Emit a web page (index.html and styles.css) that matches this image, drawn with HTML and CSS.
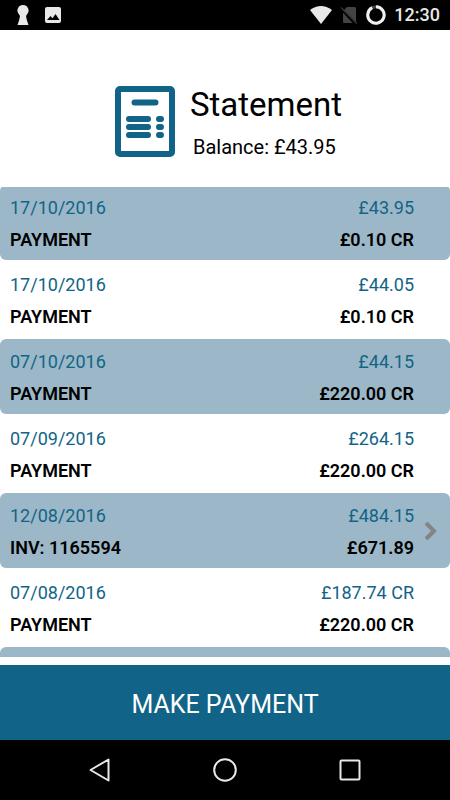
FILE: index.html
```html
<!DOCTYPE html>
<html lang="en">
<head>
<meta charset="utf-8">
<meta name="viewport" content="width=device-width, initial-scale=1">
<title>Statement</title>
<link rel="stylesheet" href="styles.css">
</head>
<body>
<div class="status-bar">
  <svg width="12" height="20" viewBox="0 0 12 20" fill="#e8e8e8" aria-hidden="true"><path d="M6 0a5.500 5.500 0 0 0-4.300 9L3 11Q2.500 15 .5 20h11Q9.500 15 9 11L10.300 9A5.500 5.500 0 0 0 6 0z"/></svg>
  <svg width="18" height="18" viewBox="0 0 18 18" aria-hidden="true"><rect x="1" y="1" width="16" height="16" rx="2" fill="#e8e8e8"/><path d="M3 14l3.500-4 2 2.200L11.500 8 15.500 14z" fill="#000"/></svg>
  <div class="signals">
    <svg width="22" height="18" viewBox="0 0 22 18" aria-hidden="true"><path d="M0 4Q11-4 22 4L11 18z" fill="#e8e8e8"/></svg>
    <svg width="18" height="18" viewBox="0 0 18 18" aria-hidden="true"><path d="M7 1h7.500q1.500 0 1.500 1.500V16q0 1-1 1H4q-1 0-1-1V5z" fill="#444"/><path d="M0 2L15 18" stroke="#000" stroke-width="2"/><path d="M1 1.500L17 17.500" stroke="#333" stroke-width="1.500"/></svg>
    <svg width="20" height="20" viewBox="0 0 20 20" fill="none" stroke-width="3" aria-hidden="true"><circle cx="10" cy="10" r="8.200" stroke="#444"/><path d="M10 1.800A8.200 8.200 0 1 1 6.200 2.700" stroke="#f0f0f0"/></svg>
    <time class="clock">12:30</time>
  </div>
</div>

<header class="summary">
  <svg width="60" height="71" viewBox="0 0 60 71" fill="none" stroke="#116487" aria-hidden="true">
    <rect x="3" y="3" width="54" height="65" rx="2" stroke-width="6"/>
    <path stroke-width="6" stroke-linecap="round" d="M19.500 16.500h21M14 33h19M14 41h19M14 49h19M44 33h2M44 41h2M44 49h2"/>
  </svg>
  <div class="summary-text">
    <h1>Statement</h1>
    <p>Balance: £43.95</p>
  </div>
</header>

<main class="viewport">
  <ul class="entries">
    <li class="entry"><span class="meta">17/10/2016</span><span class="meta">£43.95</span><strong>PAYMENT</strong><strong>£0.10 CR</strong></li>
    <li class="entry"><span class="meta">17/10/2016</span><span class="meta">£44.05</span><strong>PAYMENT</strong><strong>£0.10 CR</strong></li>
    <li class="entry"><span class="meta">07/10/2016</span><span class="meta">£44.15</span><strong>PAYMENT</strong><strong>£220.00 CR</strong></li>
    <li class="entry"><span class="meta">07/09/2016</span><span class="meta">£264.15</span><strong>PAYMENT</strong><strong>£220.00 CR</strong></li>
    <li class="entry"><span class="meta">12/08/2016</span><span class="meta">£484.15</span><strong>INV: 1165594</strong><strong>£671.89</strong>
      <svg class="chevron" width="14" height="20" viewBox="0 0 14 20" fill="none" stroke="#848484" stroke-width="4" aria-hidden="true"><path d="M2 2l8 8-8 8"/></svg></li>
    <li class="entry"><span class="meta">07/08/2016</span><span class="meta">£187.74 CR</span><strong>PAYMENT</strong><strong>£220.00 CR</strong></li>
    <li class="entry"></li>
  </ul>
</main>

<button class="pay" type="button">MAKE PAYMENT</button>

<nav class="nav-bar">
  <button type="button" aria-label="Back"><svg width="24" height="24" viewBox="0 0 24 24"><path d="M20.500 1.500v21L2.500 12z"/></svg></button>
  <button type="button" aria-label="Home"><svg width="24" height="24" viewBox="0 0 24 24"><circle cx="12" cy="12" r="10.800"/></svg></button>
  <button type="button" aria-label="Recent apps"><svg width="24" height="24" viewBox="0 0 24 24"><rect x="2.500" y="2.500" width="19" height="19" rx="1"/></svg></button>
</nav>
</body>
</html>
```
FILE: styles.css
```css
* {
  box-sizing: border-box;
}

body {
  margin: 0;
  height: 100vh;
  display: flex;
  flex-direction: column;
  background: #fff;
  color: #000;
  font-family: Roboto, "Liberation Sans", sans-serif;
}

.status-bar {
  flex: none;
  display: flex;
  align-items: center;
  gap: 15px;
  height: 30px;
  padding: 0 10px 0 17px;
  background: #000;
}

.signals {
  display: flex;
  align-items: center;
  gap: 8px;
  margin-left: auto;
}

.status-bar svg {
  flex: none;
}

.clock {
  color: #e8e8e8;
  font-size: 18px;
  font-weight: 500;
  line-height: 32px;
}

.summary {
  flex: none;
  display: flex;
  justify-content: center;
  align-items: flex-start;
  gap: 15px;
  height: 157px;
  padding: 56px 0 0 7px;
}

.summary-text {
  display: flex;
  flex-direction: column;
}

h1,
p {
  margin: 0;
  font-weight: 400;
}

h1 {
  font-size: 33px;
  line-height: 38px;
}

p {
  padding: 5px 0 0 3px;
  font-size: 20px;
  line-height: 36px;
}

.viewport {
  flex: 1;
  min-height: 0;
  overflow: hidden;
}

.entries {
  display: flex;
  flex-direction: column;
  gap: 2px;
  margin: -2px 0 0;
  padding: 0;
  list-style: none;
}

.entry {
  position: relative;
  display: grid;
  grid-template-columns: 1fr auto;
  grid-auto-rows: 32px;
  min-height: 75px;
  padding: 7px 36px 4px 10px;
  border-radius: 6px;
  font-size: 18px;
  line-height: 32px;
}

.entry:nth-child(odd) {
  background: #9cb8c8;
}

.entry > :nth-child(even) {
  text-align: right;
}

.entry strong {
  font-weight: 600;
}

.meta {
  color: #116487;
}

.chevron {
  position: absolute;
  right: 12px;
  top: 28px;
}

.pay {
  flex: none;
  height: 75px;
  margin-top: 8px;
  padding: 4px 0 0;
  border: 0;
  background: #116487;
  color: #fff;
  font: 400 25px/32px Roboto, "Liberation Sans", sans-serif;
}

.nav-bar {
  flex: none;
  display: flex;
  justify-content: center;
  gap: 77px;
  height: 60px;
  background: #000;
}

.nav-bar button {
  display: grid;
  place-items: center;
  width: 48px;
  padding: 0;
  border: 0;
  background: none;
}

.nav-bar svg {
  fill: none;
  stroke: #e8e8e8;
  stroke-width: 2;
  stroke-linejoin: round;
}
```
